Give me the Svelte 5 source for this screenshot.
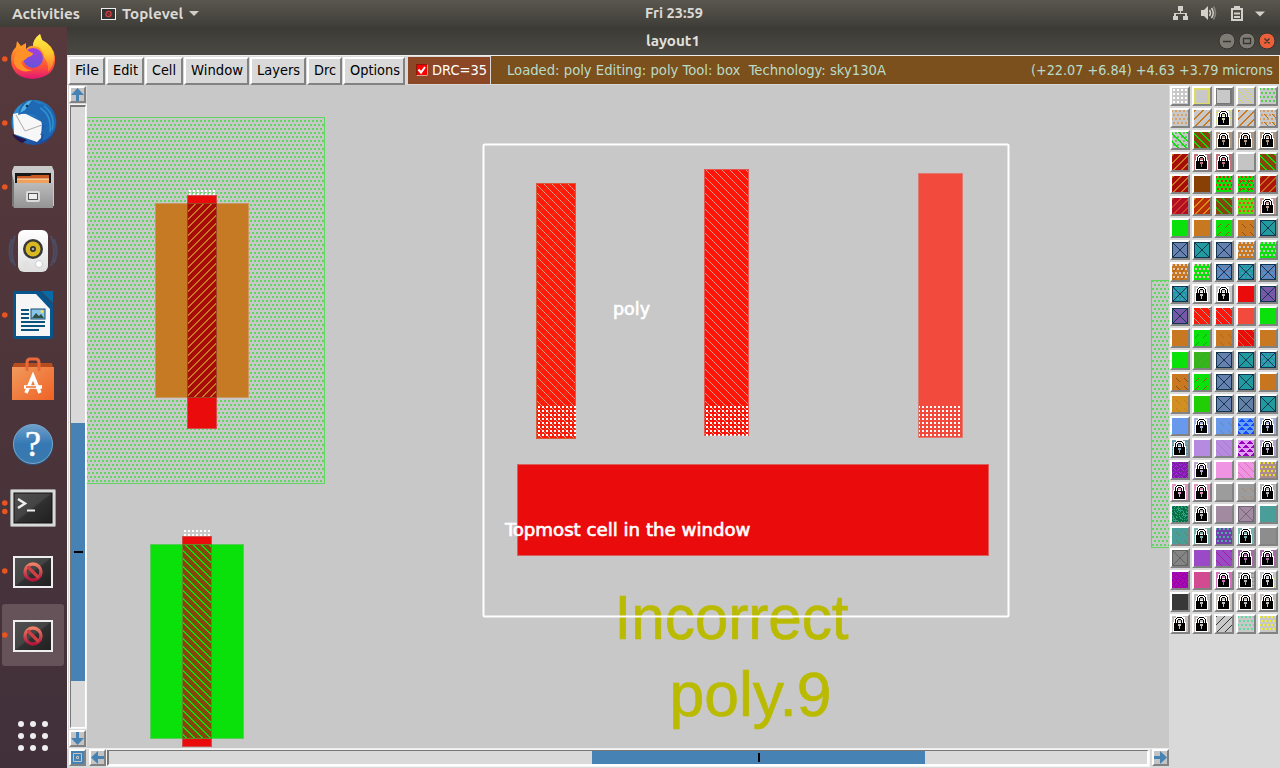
<script>
  const UI = '"DejaVu Sans Condensed", "DejaVu Sans", sans-serif';
  const SHELL = '"Ubuntu", "Noto Sans", sans-serif';
  const menus = [
    { t: 'File', w: 37, l: 24 }, { t: 'Edit', w: 38, l: 25 }, { t: 'Cell', w: 38, l: 24 },
    { t: 'Window', w: 65, l: 52 }, { t: 'Layers', w: 56, l: 43 }, { t: 'Drc', w: 35, l: 22 },
    { t: 'Options', w: 62, l: 50 }
  ];

  const G = '#0ae00a', O = '#c87820', T = '#209ca0', B = '#6880b0', P = '#7858a8', N = '#c8c8c8', BR = '#88440a', LB = '#c8c0b8';
  const test = {
    grid: (x, y) => (x + 3) % 4 < 2 && (y + 3) % 4 < 2,
    dots: (x, y) => y % 4 < 2 && (x + (y % 8 < 4 ? 1 : 3)) % 4 < 2,
    back: (x, y) => (x - y + 66) % 8 < 1,
    back2: (x, y) => (x - y + 66) % 8 < 2,
    slash: (x, y) => (x + y) % 8 < 1,
    slash2: (x, y) => (x + y) % 8 < 2,
    dashb: (x, y) => (x - y + 64) % 8 < 1 && y % 8 > 3,
    dashs: (x, y) => (x + y) % 8 < 1 && y % 8 > 3,
    stripe: (x, y) => y % 4 === 1,
    edge: (x, y) => x < 2 || y < 2 || x > 13 || y > 14,
    frame: (x, y) => x === 0 || y === 0 || x === 15 || y > 14 || (x === 14 && y > 0) || (y === 1 && x > 1),
    cross: (x, y) => x === y || x + y === 15 || x === 0 || y === 0 || x === 15 || y === 15,
    tri: (x, y) => ((x + (y % 8 > 3 ? 4 : 0)) % 8) - (y % 4) < 4 && (x + (y % 8 > 3 ? 4 : 0)) % 8 > 3 - (y % 4),
    ring: (x, y) => (Math.abs((x % 8) - 4) + Math.abs((y % 8) - 4)) % 4 === 1,
    noise: (x, y) => (x * 7 + y * 5 + ((x * y) % 5)) % 3 === 0
  };
  const pixels = (kind) => {
    let d = '';
    for (let y = 0; y < 16; y++) for (let x = 0; x < 16; x++) if (test[kind](x, y)) d += `M${x} ${y}h1v1h-1z`;
    return d;
  };
  const paths = Object.fromEntries(Object.keys(test).map((k) => [k, pixels(k)]));
  const t = (b, ...p) => ({ b, p });
  const L = (b, ...p) => ({ b, p, lock: true });
  const X = (b, ...p) => ({ b, p: [...p, 'cross', '#123650'] });
  const tiles = [
    t(N, 'grid', '#fff'), t(N, 'edge', '#dddb65'), t(N, 'frame', '#777'), t(N, 'back', '#d8d85a'), t(N, 'dots', '#55d055'),
    t(N, 'dots', '#d6a16a'), t(N, 'slash2', O), L('#d0d0b8', 'back', '#e6e54b'), t(N, 'slash2', O), t(N, 'dots', '#d49a5e', 'dashb', '#b66b1c'),
    t(N, 'dots', '#66c766', 'back2', G), t(BR, 'back2', G), L('#b09880', 'dashs', '#9ac080'), L('#b09880', 'dashs', '#9ac080'), L('#b09880', 'dashs', '#9ac080'),
    t('#a60d08', 'slash2', O), L('#c0707a'), L('#c0707a'), t('#c4c4c4'), t(BR, 'back2', G),
    t('#a60d08', 'slash2', O), t('#884004'), t(G, 'dots', '#e82010'), t(G, 'dots', '#d83a10', 'dashs', '#805010'), t('#aa1708', 'slash2', '#c86b20'),
    t('#b20d22', 'slash2', '#d04028'), t('#b93008', 'slash2', '#d89018'), t(BR, 'back2', '#10c810'), t('#52dd12', 'dots', '#f14a20'), L('#c79b95'),
    t(G), t(O), t(G, 'dashs', '#7b5b10'), t(O, 'dashb', '#9b5010'), X(T),
    X(B), X(T), X(B), t(O, 'dots', N), t(G, 'dots', N),
    t(O, 'dots', '#e0c8b4', 'dashs', '#a85518'), t(G, 'dots', '#f0b8c0'), X(B, 'dots', '#4b96e0'), X(T, 'dots', '#4b96d0'), X(B, 'dots', '#4b96e0'),
    X(T, 'dots', '#4b96d0'), L(N), L(N), t('#ea0c0c'), X(P),
    X(P), t('#f91a0a', 'back', '#b9a29b'), t('#fc150b', 'back', '#aaa2aa'), t('#f24a3c'), t(G),
    t(O), t(G, 'dashs', '#1b9e1b'), t(O, 'dashb', '#ab6418'), t('#ea0c0c', 'back', '#c86b30'), t(O),
    t(G), t('#32b51b', 'slash', '#55a832'), X(B), X(T), X(T, 'dots', '#4b96d0'),
    t(O, 'dashb', '#8c4b10'), t(G, 'dashs', '#965010'), X(B), X(T), t('#c87520'),
    t('#d08f20', 'dashb', '#b88220'), t('#21ce06'), X(B), X('#6480a5'), X(T),
    t('#6899ec'), L('#a2b2da'), t('#6899e8', 'dashb', '#7384ac'), t('#68a2f2', 'tri', '#174aff'), L('#a2b2da'),
    L('#7d9fb2', 'stripe', '#409daa'), t('#b58be2'), t('#b58be2', 'back', '#bc75c4'), t('#e2a0f2', 'tri', '#9800c0'), L('#b9a4cc'),
    t('#8515b8', 'ring', '#a636d0', 'stripe', '#752b94'), L('#b8a6cf'), t('#ee94e2'), t('#ee94e2', 'back', '#df70b0'), t('#ad8b91', 'dots', '#e5dc30'),
    L('#e094c1'), L('#e094c1'), t('#9c9c9c'), t('#9c9c9c', 'dashb', '#ad8563'), L('#b5b5b5'),
    t('#087045', 'noise', '#2fa180'), L('#b5b5b5'), t('#a28aa1'), t('#a28aa1', 'cross', '#75657b'), t('#499e99'),
    t('#499e99', 'dashb', '#68855c'), L('#76b2ae'), t('#713faa', 'dots', '#4eaaa3'), L('#76b2ae'), t('#8d8d8d'),
    t('#858585', 'cross', '#626262'), t('#9a49c7'), t('#9a49c7', 'back', '#a32392'), L('#a86ba8'), L('#a86ba8'),
    t('#9704b3', 'ring', '#c1119b'), t('#d24a90'), L('#d370bd'), L('#b2b2b2', 'stripe', '#8f8f8f'), L(N, 'dashb', '#dedd4b'),
    t('#383838'), L('#bdbdbd'), L(LB), L(LB), L(LB),
    L(LB), L(LB), t(N, 'slash', '#333'), t(N, 'dots', '#61d9a1'), t(N, 'dots', '#eeee28')
  ];

  const apps = ['firefox', 'mail', 'files', 'sound', 'writer', 'store', 'help', 'term', 'unknown', 'unknown'];
  const dots = [1, 1, 1, 0, 1, 0, 0, 2, 1, 1];
  const layers = [0, 2];
</script>

{#snippet label(text, width, size, weight, fill, family)}
  <svg class="label" width={width} height="20"><text x="0" y="15" textLength={width} lengthAdjust="spacingAndGlyphs" font-size={size} font-weight={weight} {fill} font-family={family} xml:space="preserve">{text}</text></svg>
{/snippet}

{#snippet forbidden()}
  <rect x="13" y="16" width="40" height="32" fill="#eee" />
  <rect x="15" y="18" width="36" height="28" fill="url(#screen)" />
  <circle cx="33" cy="32" r="8" fill="none" stroke="url(#ban)" stroke-width="3.4" />
  <path d="M27.5 26.5l11 11" stroke="#cf3e44" stroke-width="3.2" />
{/snippet}

<div class="desktop">
  <header class="top">
    <div class="left">
      {@render label('Activities', 68, 14.5, 700, '#dcdad5', SHELL)}
      <svg class="appicon" width="15" height="12"><rect x=".5" y=".5" width="14" height="11" fill="#333" stroke="#eee" /><circle cx="7.5" cy="6" r="2.6" fill="none" stroke="#d93c3c" stroke-width="1.3" /><path d="M5.8 4.3l3.4 3.4" stroke="#d93c3c" /></svg>
      {@render label('Toplevel', 61, 14.5, 700, '#dcdad5', SHELL)}
      <svg width="10" height="6" class="caret"><path d="M0 0h10l-5 5z" fill="#cfcdc8" /></svg>
    </div>
    <div class="clock">{@render label('Fri 23:59', 58, 14.5, 700, '#dcdad5', SHELL)}</div>
    <svg class="status" width="100" height="20" fill="#d2d0cb">
      <path d="M8 3h5v5h-2v2h6v3h1v4h-5v-4h2v-2H6v2h2v4H3v-4h1v-3h6V8H8z" />
      <path d="M31 7h3l4-4v14l-4-4h-3z" /><path d="M39.5 7q2 3 0 6M41.5 5q3.5 5 0 10" fill="none" stroke="#d2d0cb" stroke-width="1.5" /><path d="M43.5 3.5q4 6.500 0 13" fill="none" stroke="#85837c" stroke-width="1.5" />
      <path d="M64 3h6v2h3v13H61V5h3zM63 7v9h8V7z" fill-rule="evenodd" /><path d="M64 9.500h6v2h-6zM64 13h6v2h-6z" />
      <path d="M85 8.500h10l-5 5z" />
    </svg>
  </header>

  <div class="main">
    <aside class="dock">
      {#each apps as app, i}
        <div class="app">
          <svg width="67" height="64">
            {#if i === 9}<rect x="2" y="1" width="62" height="62" rx="3" fill="#66535a" />{/if}
            {#if dots[i] === 1}<circle cx="4.800" cy="32" r="2.800" fill="#e95420" />{/if}
            {#if dots[i] === 2}<circle cx="4.800" cy="28" r="2.800" fill="#e95420" /><circle cx="4.800" cy="36.500" r="2.800" fill="#e95420" />{/if}
            <g transform={i > 5 ? 'translate(0 1)' : null}>
            {#if app === 'firefox'}
              <path d="M11 32q0-7 5-12l1-6 4 5 5-3v6q4-4 7-3 0-6 7-12l2 6q12 6 13 17 1 14-10 19-13 6-25 0-9-5-9-17z" fill="url(#fox)" />
              <circle cx="33" cy="31" r="10" fill="url(#globe)" />
              <path d="M33 19q0-7 7-12l2 6q12 6 12 17 0 9-6 15 1-8-4-15 0-5-6-10z" fill="url(#flame)" />
              <path d="M17 24q6-4 10-1 4 3 6 3 0 3-5 4l-2 2q-3 2-5 3 4 9 12 8-10 4-17-3-5-7 1-16z" fill="#ff9128" />
            {:else if app === 'mail'}
              <circle cx="34" cy="31.500" r="22.500" fill="url(#bird)" />
              <path d="M13 23l9-2 20 10-1 16-4 4-23-8z" fill="#f7f7f7" />
              <path d="M16 24l9 16 17-6" fill="none" stroke="#aaa" />
              <path d="M18 24q3-16 14-15l7 4q14 1 17 17 1 14-14 20l2-7-4 1 5-9-3-2q-3-11-13-10-6-1-11 1z" fill="#1f68b4" />
              <path d="M20 22q3-11 12-13l-7 10z" fill="#54b0df" /><path d="M12 43l15 6-5 3q-7-3-10-9z" fill="#25164d" />
              <path d="M40 17q12 7 10 24M44 15q12 9 8 24" fill="none" stroke="#2d94cf" stroke-width="1.500" /><circle cx="27" cy="15" r="1.300" fill="#083860" />
            {:else if app === 'files'}
              <path d="M14 11h38l2 5v35H12V16z" fill="#c9c9c9" /><path d="M15 18h36v14H15z" fill="#181818" />
              <path d="M17 21h13l2-1h17v12H17z" fill="#c85a22" /><path d="M17 24h32v5H17z" fill="#efa15b" /><path d="M17 24h32" stroke="#ffe6be" />
              <path d="M12 50V19l2 8v26z" fill="#777" /><path d="M14 28h39v25H14z" fill="url(#metal)" />
              <rect x="27" y="37" width="12" height="9" rx="1" fill="#bbb" stroke="#dcdcdc" stroke-width="2" /><rect x="28.500" y="38.500" width="9" height="6" fill="#eee" stroke="#555" />
            {:else if app === 'sound'}
              <path d="M15 17q-6 15 0 30M12 20q-5 12 0 24M51 17q6 15 0 30M54 20q5 12 0 24" fill="none" stroke="#4a587a" stroke-width="2" opacity=".65" />
              <rect x="18" y="11" width="30" height="42" rx="6" fill="url(#paper)" />
              <circle cx="33" cy="30" r="10" fill="#383838" /><circle cx="33" cy="30" r="7.500" fill="#d8b921" /><circle cx="33" cy="30" r="3" fill="#333" /><circle cx="33" cy="30" r="1.300" fill="#aaa" />
              <circle cx="39" cy="45" r="3.500" fill="#fff" stroke="#ccc" /><rect x="24" y="43" width="4" height="4" fill="none" stroke="#ddd" />
            {:else if app === 'writer'}
              <path d="M13 8h27l13 13v32q0 3-3 3H16q-3 0-3-3z" fill="#07558c" /><path d="M41 8h12v12z" fill="#076baa" /><path d="M16 11h20l14 15v27H16z" fill="#f6f6f6" />
              <path d="M21 27h8M21 31h8M21 35h8M21 39h24M21 43h24M21 47h18" stroke="#0b527c" stroke-width="2" />
              <rect x="31" y="26" width="14" height="10" fill="#8ac4e8" stroke="#174d70" /><path d="M32 35l4-5 3 3 2-2 3 4z" fill="#315145" /><circle cx="42" cy="28.500" r="1.500" fill="#ffe04b" />
            {:else if app === 'store'}
              <path d="M14 16h38l1 5H12z" fill="#b74d1e" /><path d="M12 20h42v33H12z" fill="url(#bag)" />
              <path d="M27 24v-8q0-4 3-4h6q3 0 3 4v8" fill="none" stroke="#eb683a" stroke-width="3" />
              <path d="M26 46l7-17 7 17M24 40h18" fill="none" stroke="#fff" stroke-width="3.500" /><path d="M26 40h10" stroke="#ee6c31" stroke-width="1.500" />
            {:else if app === 'help'}
              <circle cx="33" cy="33" r="20" fill="#285782" /><circle cx="33" cy="32" r="19.500" fill="url(#help)" stroke="#78a7d0" />
              <text x="33" y="44" text-anchor="middle" fill="#fff" font-size="36" font-family="Liberation Serif, serif" stroke="#fff" stroke-width=".5">?</text>
            {:else if app === 'term'}
              <rect x="10.500" y="13.500" width="45" height="37" rx="1" fill="#d9d9d9" stroke="#999" /><rect x="14" y="17" width="38" height="30" fill="url(#screen)" stroke="#111" />
              <path d="M18 23l7 4.500-7 4.500" fill="none" stroke="#eee" stroke-width="2.500" /><path d="M27 34.500h8" stroke="#eee" stroke-width="2" />
            {:else}{@render forbidden()}{/if}
            </g>
          </svg>
        </div>
      {/each}
      <svg class="grid" width="67" height="40" fill="#eee">
        {#each [8, 20, 32] as y}{#each [21, 33, 45] as x}<circle cx={x} cy={y} r="3" />{/each}{/each}
      </svg>
    </aside>

    <section class="window">
      <div class="title">
        <div class="name">{@render label('layout1', 54, 14, 700, '#e2e0db', SHELL)}</div>
        <svg class="controls" width="60" height="20">
          <circle cx="10" cy="10" r="8" fill="#7d7b74" stroke="#33322e" /><circle cx="30" cy="10" r="8" fill="#7d7b74" stroke="#33322e" /><circle cx="50" cy="10" r="8" fill="#ec6039" stroke="#33322e" />
          <path d="M6 10.500h8M26.500 7.500h7v5h-7zM47.500 7.500l5 5m0-5l-5 5" fill="none" stroke="#35342f" stroke-width="1.300" />
        </svg>
      </div>
      <div class="menu">
        {#each menus as m}
          <div class="item" style:width="{m.w}px">{@render label(m.t, m.l, 14.5, 400, '#000', UI)}</div>
        {/each}
        <div class="drc">
          <svg width="12" height="12"><rect x=".5" y=".5" width="11" height="11" fill="red" stroke="#8c1808" /><path d="M.5 11.500h11V.5" fill="none" stroke="#e0a090" /><path d="M2.500 5.500l2.500 3 4-5.500" fill="none" stroke="#fff" stroke-width="2" /></svg>
          {@render label('DRC=35', 55, 14.5, 400, '#fff', UI)}
        </div>
        <div class="info">
          {@render label('Loaded: poly Editing: poly Tool: box  Technology: sky130A', 379, 14.5, 400, '#b9dccb', UI)}
          {@render label('(+22.07 +6.84) +4.63 +3.79 microns', 242, 14.5, 400, '#b9dccb', UI)}
        </div>
      </div>

      <div class="work">
        <div class="vbar">
          <div class="btn"><svg width="13" height="13"><path d="M6.500 0L13 7H8v6H5V7H0z" fill="#4682b4" /></svg></div>
          <div class="trough"><div class="thumb"><i></i></div></div>
          <div class="btn"><svg width="13" height="13"><path d="M5 0h3v6h5l-6.500 7L0 6h5z" fill="#4682b4" /></svg></div>
        </div>

        <svg class="canvas" width="1082" height="663" viewBox="87 85 1082 663" shape-rendering="crispEdges">
          <defs>
            <linearGradient id="fox" x2="0" y2="1"><stop offset=".3" stop-color="#ff9a26" /><stop offset=".7" stop-color="#ff5436" /><stop offset="1" stop-color="#e31578" /></linearGradient>
            <linearGradient id="flame" x2="0" y2="1"><stop stop-color="#fff04a" /><stop offset=".5" stop-color="#ffc72c" /><stop offset="1" stop-color="#ff6736" /></linearGradient>
            <linearGradient id="globe" x2="0" y2="1"><stop stop-color="#a83ae0" /><stop offset="1" stop-color="#6157d8" /></linearGradient>
            <linearGradient id="bird" x2="1" y2="1"><stop stop-color="#289cdc" /><stop offset="1" stop-color="#193c92" /></linearGradient>
            <linearGradient id="metal" x2="0" y2="1"><stop stop-color="#bbb" /><stop offset="1" stop-color="#949494" /></linearGradient>
            <linearGradient id="paper" x2="0" y2="1"><stop stop-color="#fff" /><stop offset="1" stop-color="#dedede" /></linearGradient>
            <linearGradient id="bag" x2="1" y2="1"><stop stop-color="#f09a5d" /><stop offset="1" stop-color="#f06225" /></linearGradient>
            <linearGradient id="help" x2="0" y2="1"><stop stop-color="#6fa0ca" /><stop offset=".5" stop-color="#3578b4" /><stop offset="1" stop-color="#3b79ad" /></linearGradient>
            <linearGradient id="screen" x2="1" y2="1"><stop stop-color="#505050" /><stop offset=".48" stop-color="#444" /><stop offset=".52" stop-color="#303030" /><stop offset="1" stop-color="#202020" /></linearGradient>
            <linearGradient id="ban" x2="0" y2="1"><stop stop-color="#f08066" /><stop offset="1" stop-color="#ae163a" /></linearGradient>
            <pattern id="well" width="4" height="8" patternUnits="userSpaceOnUse"><path d="M0 0h2v2H0zM2 4h2v2H2z" fill="#5fd75f" /></pattern>
            <pattern id="holes" width="4" height="4" patternUnits="userSpaceOnUse" x="538" y="406"><rect width="2" height="2" fill="#fff" /></pattern>
            <pattern id="up" width="8" height="8" patternUnits="userSpaceOnUse"><path d="M6 0h2v1H6zM5 1h2v1H5zM4 2h2v1H4zM3 3h2v1H3zM2 4h2v1H2zM1 5h2v1H1zM0 6h2v1H0zM7 7h1v1H7zM0 7h1v1H0z" fill="#c87820" /></pattern>
            <pattern id="down" width="8" height="8" patternUnits="userSpaceOnUse"><path d="M0 0h2v1H0zM1 1h2v1H1zM2 2h2v1H2zM3 3h2v1H3zM4 4h2v1H4zM5 5h2v1H5zM6 6h2v1H6zM7 7h1v1H7zM0 7h1v1H0z" fill="#0ae00a" /></pattern>
            <pattern id="thin" width="8" height="8" patternUnits="userSpaceOnUse"><path d="M0 0h1v1H0zM1 1h1v1H1zM2 2h1v1H2zM3 3h1v1H3zM4 4h1v1H4zM5 5h1v1H5zM6 6h1v1H6zM7 7h1v1H7z" fill="#dc9c90" /></pattern>
            <pattern id="faint" width="16" height="16" patternUnits="userSpaceOnUse"><path d="M0 15L15 0" stroke="#e83a10" /></pattern>
          </defs>
          <rect x="80.500" y="117.500" width="244" height="366" fill="url(#well)" stroke="#5fd75f" />
          <rect x="1151.500" y="280.500" width="30" height="267" fill="url(#well)" stroke="#5fd75f" />
          <rect x="155.500" y="203.500" width="93" height="194" fill="#c67a23" stroke="#c79960" />
          <rect x="187.500" y="195.500" width="29" height="233" fill="#ea0c0c" stroke="#cf504b" />
          <rect x="188" y="204" width="28" height="193" fill="#a60b08" /><rect x="188" y="204" width="28" height="193" fill="url(#up)" />
          <path d="M187.500 203.500h29v194h-29z" fill="none" stroke="#9c4525" />
          <g fill="#fff">{#each Array(7) as _, i}<rect x={189 + i * 4} y="190" width="2" height="2" /><rect x={189 + i * 4} y="193" width="2" height="2" /><rect x={184 + i * 4} y="530" width="2" height="2" /><rect x={184 + i * 4} y="534" width="2" height="2" />{/each}</g>
          <rect x="150.500" y="544.500" width="93" height="194" fill="#0ae00a" stroke="#5bc95b" />
          <rect x="182.500" y="536.500" width="29" height="210" fill="#ea0c0c" stroke="#cf504b" />
          <rect x="183" y="545" width="28" height="193" fill="#88440a" /><rect x="183" y="545" width="28" height="193" fill="url(#down)" />
          <path d="M182.500 544.500h29v194h-29z" fill="none" stroke="#698529" />

          <rect x="536.500" y="183.500" width="39" height="255" fill="#fc1a08" stroke="#d85a3b" /><rect x="537" y="184" width="38" height="254" fill="url(#faint)" /><rect x="537" y="184" width="38" height="254" fill="url(#thin)" /><rect x="537" y="406" width="39" height="32" fill="url(#holes)" />
          <rect x="704.500" y="169.500" width="44" height="266" fill="#ff1508" stroke="#e75651" /><rect x="705" y="170" width="43" height="265" fill="url(#thin)" /><rect x="705" y="406" width="43" height="30" fill="url(#holes)" />
          <rect x="918.500" y="173.500" width="44" height="264" fill="#f24a3c" stroke="#df7a70" /><rect x="919" y="406" width="43" height="32" fill="url(#holes)" />
          <rect x="517.500" y="464.500" width="471" height="91" fill="#ea0c0c" stroke="#d9605c" />
          <g fill="#babb00" font-family="Liberation Sans, Arial, sans-serif" font-size="63">
            <text x="614.500" y="638.500" textLength="234" lengthAdjust="spacingAndGlyphs" stroke="#babb00" stroke-width=".7">Incorrect</text>
            <text x="669.500" y="716" textLength="162" lengthAdjust="spacingAndGlyphs" stroke="#babb00" stroke-width=".7">poly.9</text>
          </g>
          <rect x="483.500" y="144.500" width="525" height="472" rx="1" fill="none" stroke="#fff" stroke-width="2" shape-rendering="auto" />
          <g fill="#fff" stroke="#fff" stroke-width=".6" font-family={UI} font-size="18">
            <text x="613" y="315" textLength="37" lengthAdjust="spacingAndGlyphs">poly</text>
            <text x="505" y="536" textLength="245.500" lengthAdjust="spacingAndGlyphs">Topmost cell in the window</text>
          </g>
        </svg>

        <div class="palette">
          {#each tiles as tile}
            <svg class="tile" width="16" height="16" shape-rendering="crispEdges">
              <rect width="16" height="16" fill={tile.b} />
              {#each layers as k}{#if tile.p[k]}<path d={paths[tile.p[k]]} fill={tile.p[k + 1]} />{/if}{/each}
              {#if tile.lock}
                <path d="M4 0h7v1h2v5h1v10H1V6h1V2h2z" fill="#fff" />
                <path d="M5 1h5v1H5zM4 2h1v1H4zM10 2h1v1h-1zM3 3h1v4H3zM11 3h1v4h-1zM6 3h3v1H6zM5 4h1v3H5zM9 4h1v3H9z" fill="#000" />
                <path d="M6 4h3v2H6z" fill={tile.b} />
                <path d="M2 7h11v8H2z" fill="#000" />
                <path d="M6 8h3v2H8v3H7v-3H6z" fill={tile.b} />
              {/if}
            </svg>
          {/each}
        </div>

        <div class="hbar">
          <div class="btn"><svg width="13" height="13"><path d="M0 0h13v13H0z" fill="#4682b4" /><path d="M2.500 2.500h8v8h-8z" fill="#4682b4" stroke="#c3c3c3" /><path d="M5.500 5.500h2v2h-2z" fill="none" stroke="#c3c3c3" /></svg></div>
          <div class="btn"><svg width="13" height="13"><path d="M0 6.500L7 0v5h6v3H7v5z" fill="#4682b4" /></svg></div>
          <div class="htrough"><div class="hthumb"><i></i></div></div>
          <div class="btn"><svg width="13" height="13"><path d="M13 6.500L6 0v5H0v3h6v5z" fill="#4682b4" /></svg></div>
        </div>
      </div>
    </section>
  </div>
</div>

<style>
  :global(body) { margin: 0; overflow: hidden; }
  .desktop { width: 1280px; height: 768px; display: flex; flex-direction: column; overflow: hidden; }
  svg { display: block; flex: none; }
  .label { overflow: visible; }
  .top { height: 27px; display: grid; grid-template-columns: 645px 1fr auto; background: linear-gradient(#5a574e, #3e3d38); }
  .left { display: flex; align-items: flex-start; padding: 4px 0 0 12px; }
  .appicon { margin: 4px 6px 0 21px; }
  .caret { margin: 7px 0 0 6px; }
  .clock { padding-top: 3px; }
  .status { margin: 3px 10px 0 0; }
  .main { display: flex; height: 741px; }
  .dock { width: 67px; display: flex; flex-direction: column; background: linear-gradient(#57393c, #4c353a 50%, #41303a); }
  .app { height: 64px; }
  .grid { margin-top: 49px; }
  .window { width: 1213px; background: #d9d9d9; }
  .title { height: 28px; display: flex; justify-content: space-between; padding: 0 3px 0 579px; background: linear-gradient(#3b3a36, #4a4943); }
  .name { padding-top: 4px; }
  .controls { margin-top: 4px; }
  .menu { box-sizing: border-box; height: 30px; display: flex; padding: 1px 0 0 1px; border-top: 1px solid #eee; gap: 1px; }
  .item { box-sizing: border-box; height: 28px; padding: 1px 0 0 5px; border: solid; border-width: 2px; border-color: #fff #828282 #828282 #fff; }
  .drc { width: 82px; height: 27px; display: flex; align-items: center; gap: 4px; padding: 0 0 1px 8px; box-sizing: border-box; background: #8b4726; margin-left: 2px; }
  .info { flex: 1; height: 28px; box-sizing: border-box; margin: -1px 1px 0 0; padding: 4px 6px 0 16px; display: flex; justify-content: space-between; background: #7b501c; }
  .work { display: grid; grid-template-columns: 20px 1082px 111px; grid-template-rows: 663px 20px; }
  .vbar { display: flex; flex-direction: column; padding: 1px 0 1px 1px; border-left: 1px solid #fff; box-sizing: border-box; }
  .btn { box-sizing: border-box; width: 17px; height: 17px; border: 2px solid; border-color: #fff #828282 #828282 #fff; background: #c3c3c3; flex: none; }
  .trough { flex: 1; margin: 2px 1px 2px 1px; border: 1px solid; border-width: 2px 1px 1px 1px; border-color: #777 #fff #fff #777; background: #d9d9d9; box-shadow: 0 0 0 1px #f4f4f4; }
  .thumb { margin-top: 316px; height: 258px; background: #4682b4; display: flex; align-items: center; justify-content: center; }
  .thumb i { width: 9px; height: 2px; background: #000; }
  .canvas { background: #c8c8c8; }
  .palette { background: #d9d9d9; display: grid; grid-template-columns: repeat(5, 20px); grid-auto-rows: 20px; gap: 2px; align-content: start; padding: 1px 0 0 1px; }
  .tile { border: 2px solid; border-color: #fff #828282 #828282 #fff; }
  .hbar { grid-column: 1 / 4; display: flex; align-items: flex-start; padding: 0 0 0 2px; gap: 3px; border-top: 1px solid #eee; box-sizing: border-box; width: 1102px; }
  .vbar .btn { margin-left: 0; }
  .htrough { box-sizing: border-box; flex: 1; height: 16px; margin: 1px 0 0 -2px; border: solid; border-width: 1px 2px 2px 2px; border-color: #777 #fff #fff #777; box-shadow: 0 0 0 1px #f4f4f4; }
  .hthumb { margin-left: 483px; width: 333px; height: 13px; background: #4682b4; display: flex; align-items: center; justify-content: center; }
  .hthumb i { width: 2px; height: 9px; background: #000; }
</style>
